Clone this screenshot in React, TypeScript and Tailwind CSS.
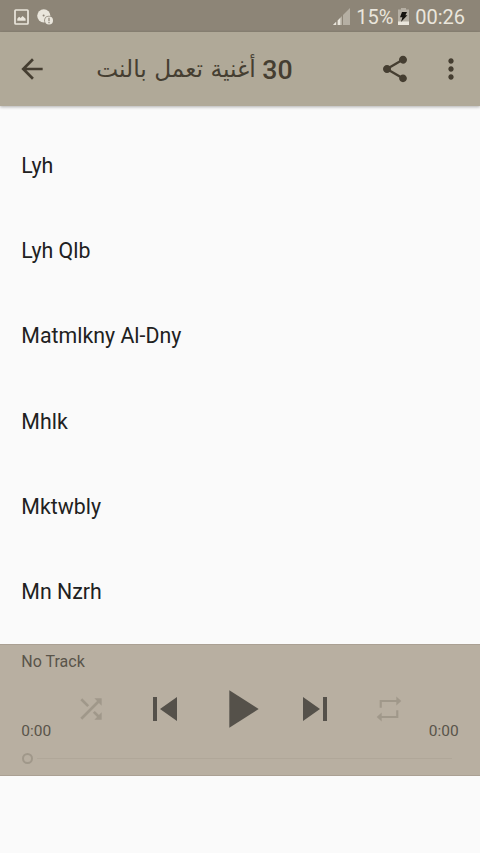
import type { ReactNode } from "react";

const tracks = ["Lyh", "Lyh Qlb", "Matmlkny Al-Dny", "Mhlk", "Mktwbly", "Mn Nzrh"];

function Icon({ className, children }: { className: string; children: ReactNode }) {
  return (
    <svg viewBox="0 0 24 24" fill="currentColor" className={className}>
      {children}
    </svg>
  );
}

function StatusBar() {
  return (
    <div className="flex h-8 items-center bg-[#8d8577] pl-3.5 pr-[15px] text-[#eae6dc]">
      <svg viewBox="0 0 15 16" className="mt-px h-4 w-[15px] shrink-0">
        <rect x="1" y="1" width="13" height="14" rx="0.8" fill="none" stroke="currentColor" strokeWidth="1.7" />
        <path d="M3.3 11.8V9.8l1.8-2 1.6 1.3 1.9-2 3 2.7v2z" fill="currentColor" />
      </svg>
      <svg viewBox="0 0 16 16" className="ml-2 mt-px h-4 w-4 shrink-0">
        <circle cx="6.8" cy="6.8" r="6.6" fill="currentColor" />
        <circle cx="6.6" cy="6.6" r="1" fill="#8d8577" />
        <circle cx="11.9" cy="11.4" r="4.7" fill="#8d8577" />
        <circle cx="12" cy="11.5" r="4" fill="currentColor" />
        <path d="M11.4 8.7h1.2v3.5h-1.2zM11.4 13.1h1.2v1.2h-1.2z" fill="#8d8577" />
      </svg>
      <div className="flex-1" />
      <svg viewBox="0 0 17 17" className="mt-px h-[17px] w-[17px] shrink-0">
        <path d="M17 0v17h-7V7z" fill="#b5afa3" />
        <path d="M0 17l3-3v3zM7.5 9.5V17H9V8z" fill="#b5afa3" />
        <path d="M0 17l3.2-3.2V17zM4.6 12.4l2.9-2.9V17H4.6z" fill="currentColor" />
      </svg>
      <span className="ml-1.5 mt-0.5 w-9 whitespace-nowrap text-[20px] leading-8">15%</span>
      <svg viewBox="0 0 11 17" className="ml-[6px] mt-px h-[17px] w-[11px] shrink-0">
        <path d="M3 0h5v1.5h3V17H0V1.5h3z" fill="#b5afa3" />
        <path d="M0 13.5h11V17H0z" fill="currentColor" />
        <path d="M4 4h5L7.4 7.2h2L3 14l1.4-4.8H2z" fill="#16140f" />
      </svg>
      <span className="ml-[6px] mt-0.5 whitespace-nowrap text-[20px] leading-8">00:26</span>
    </div>
  );
}

function Toolbar() {
  return (
    <header className="flex h-[74.4px] items-center bg-[#b0a998] pl-4 pr-[13px] text-[#453e31] shadow-[0_1px_3px_rgba(0,0,0,0.3)]">
      <button aria-label="Back">
        <Icon className="h-8 w-8">
          <path d="M20 11H7.83l5.59-5.59L12 4l-8 8 8 8 1.41-1.41L7.83 13H20v-2z" />
        </Icon>
      </button>
      <h1 dir="rtl" className="ml-12 w-[196.6px] whitespace-nowrap pb-0.5 text-[26.67px] font-medium leading-none">
        <span className="inline-block translate-y-[2px]">30</span>{" "}
        <span className="font-['DejaVu_Sans'] text-[23.3px] font-normal">أغنية تعمل بالنت</span>
      </h1>
      <div className="flex-1" />
      <button aria-label="Share">
        <Icon className="h-8 w-8">
          <path d="M18 16.08c-.76 0-1.44.3-1.96.77L8.91 12.7c.05-.23.09-.46.09-.7s-.04-.47-.09-.7l7.05-4.11c.54.5 1.25.81 2.04.81 1.66 0 3-1.34 3-3s-1.34-3-3-3-3 1.34-3 3c0 .24.04.47.09.7L8.04 9.81C7.5 9.31 6.79 9 6 9c-1.66 0-3 1.34-3 3s1.34 3 3 3c.79 0 1.5-.31 2.04-.81l7.12 4.16c-.05.21-.08.43-.08.65 0 1.61 1.31 2.92 2.92 2.92 1.61 0 2.92-1.31 2.92-2.92s-1.31-2.92-2.92-2.92z" />
        </Icon>
      </button>
      <button aria-label="More options" className="ml-6">
        <Icon className="h-8 w-8">
          <path d="M12 8c1.1 0 2-.9 2-2s-.9-2-2-2-2 .9-2 2 .9 2 2 2zm0 2c-1.1 0-2 .9-2 2s.9 2 2 2 2-.9 2-2-.9-2-2-2zm0 6c-1.1 0-2 .9-2 2s.9 2 2 2 2-.9 2-2-.9-2-2-2z" />
        </Icon>
      </button>
    </header>
  );
}

function Player() {
  return (
    <footer className="h-[132px] border-y border-[#aaa093] bg-[#b8afa1] px-[21.33px] text-[16px] text-[#59544a]">
      <div className="pt-[7px] leading-5">No Track</div>
      <div className="flex h-[74px] justify-between">
        <span className="w-[46px] self-end pb-[5px] text-[15.5px] leading-5">0:00</span>
        <div className="flex h-[74px] flex-1 items-center pl-[7.5px] text-[#55514a]">
          <button aria-label="Shuffle" className="text-[#a0988a]">
            <Icon className="h-8 w-8">
              <path d="M10.59 9.17L5.41 4 4 5.41l5.17 5.17 1.42-1.41zM14.5 4l2.04 2.04L4 18.59 5.41 20 17.96 7.46 20 9.5V4h-5.5zm.33 9.41l-1.41 1.41 3.13 3.13L14.5 20H20v-5.5l-2.04 2.04-3.13-3.13z" />
            </Icon>
          </button>
          <button aria-label="Previous" className="ml-[34px]">
            <Icon className="h-12 w-12">
              <path d="M6 6h2v12H6zm3.5 6l8.5 6V6z" />
            </Icon>
          </button>
          <button aria-label="Play" className="ml-[19px]">
            <Icon className="h-16 w-16">
              <path d="M8 5v14l11-7z" />
            </Icon>
          </button>
          <button aria-label="Next" className="ml-[19px]">
            <Icon className="h-12 w-12">
              <path d="M6 18l8.5-6L6 6v12zM16 6v12h2V6h-2z" />
            </Icon>
          </button>
          <button aria-label="Repeat" className="ml-[34px] text-[#a0988a]">
            <Icon className="h-8 w-8">
              <path d="M5 11V5.2h12.5V2.6L21.2 6l-3.7 3.4V6.8H6.6V11zM19 13v5.8H6.5v2.6L2.8 18l3.7-3.4v2.6h10.9V13z" />
            </Icon>
          </button>
        </div>
        <span className="self-end pb-[5px] text-[15.5px] leading-5">0:00</span>
      </div>
      <div className="flex h-[26px] items-center">
        <div className="ml-px h-[11px] w-[11px] rounded-full border-2 border-[#a0988a]" />
        <div className="ml-1 mr-[7px] h-px flex-1 bg-[#b0a799]" />
      </div>
    </footer>
  );
}

export default function App() {
  return (
    <div className="flex h-[853px] w-[480px] flex-col overflow-hidden bg-[#fafafa] font-[Roboto,'DejaVu_Sans',sans-serif]">
      <StatusBar />
      <Toolbar />
      <ul className="h-[537.2px] pt-[16.5px] text-[21.33px] text-[#212121]">
        {tracks.map((track) => (
          <li key={track} className="flex h-[85.33px] items-center px-[21.33px]">
            {track}
          </li>
        ))}
      </ul>
      <Player />
    </div>
  );
}
